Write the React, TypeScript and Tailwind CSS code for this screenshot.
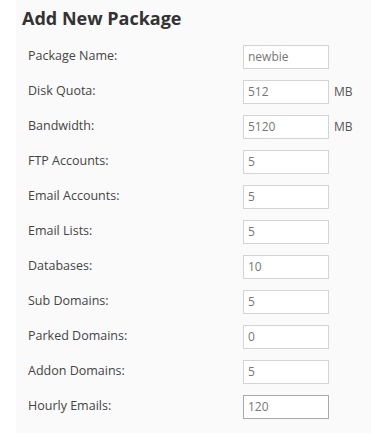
import React from 'react';

const rows: { label: string; value: string; unit?: string }[] = [
  { label: 'Package Name:', value: 'newbie' },
  { label: 'Disk Quota:', value: '512', unit: 'MB' },
  { label: 'Bandwidth:', value: '5120', unit: 'MB' },
  { label: 'FTP Accounts:', value: '5' },
  { label: 'Email Accounts:', value: '5' },
  { label: 'Email Lists:', value: '5' },
  { label: 'Databases:', value: '10' },
  { label: 'Sub Domains:', value: '5' },
  { label: 'Parked Domains:', value: '0' },
  { label: 'Addon Domains:', value: '5' },
  { label: 'Hourly Emails:', value: '120' },
];

export default function App() {
  return (
    <div className="w-[371px] h-[433px] overflow-hidden bg-white pl-[16px] font-['Open_Sans',sans-serif]">
      <div className="h-full bg-[#fafafa]">
        <h2 className="pl-[6px] pt-[4px] h-[36px] text-[18px] font-bold text-[#333] leading-[28px]">Add New Package</h2>
        {/* form rows */}
        <div className="pt-[3px]">
          {rows.map((row, i) => (
            <div key={row.label} className="flex items-center h-[35px]">
              <span className="w-[227px] pl-[12px] text-[12.5px] text-[#444]">{row.label}</span>
              <input
                readOnly
                value={row.value}
                className={`w-[86px] h-[24px] bg-white border px-[4px] text-[12px] text-[#777] outline-none ${
                  i === rows.length - 1 ? 'border-[#a9a9a9]' : 'border-[#d4d4d4]'
                }`}
              />
              {row.unit && <span className="ml-[5px] text-[12px] text-[#555]">{row.unit}</span>}
            </div>
          ))}
        </div>
      </div>
    </div>
  );
}
